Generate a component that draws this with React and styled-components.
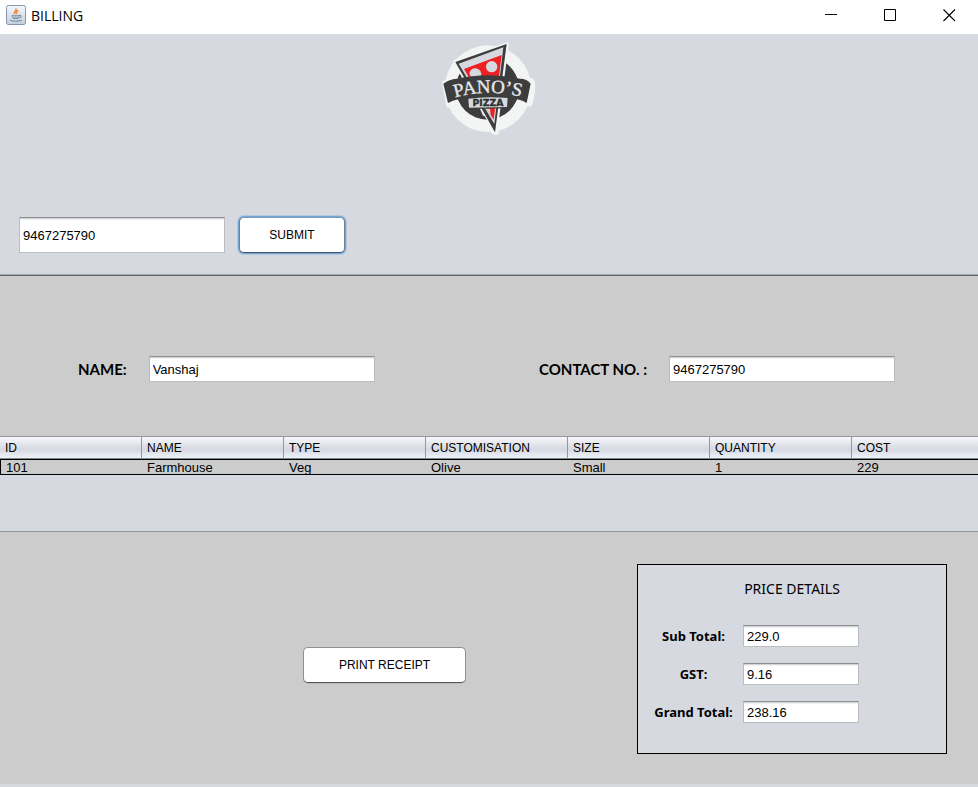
import React from "react";
import styled, { createGlobalStyle, css } from "styled-components";

const PANEL = "#d6d9e0";
const GREY = "#cccccc";

const GlobalStyle = createGlobalStyle`
  * { box-sizing: border-box; }
  body {
    margin: 0;
    background: ${PANEL};
    color: #000;
    font-family: "Liberation Sans", Arial, sans-serif;
    font-size: 13px;
    line-height: 16px;
  }
  button, input { font: inherit; color: inherit; }
`;

const TitleBar = styled.header`
  display: flex;
  align-items: center;
  height: 34px;
  padding-left: 6px;
  background: #fff;
`;

const AppIcon = styled.svg`
  width: 20px;
  height: 20px;
  margin-bottom: 4px;
`;

const WindowTitle = styled.h1`
  flex: 1;
  margin: 0 0 2px 5px;
  font: 400 14px/20px "Open Sans", "Noto Sans", sans-serif;
`;

const WindowControls = styled.div`
  display: flex;
  gap: 1px;
  padding-bottom: 4px;
`;

const WindowButton = styled.button`
  display: flex;
  align-items: center;
  justify-content: center;
  width: 58px;
  height: 30px;
  padding: 0;
  border: 0;
  background: transparent;

  svg {
    width: 13px;
    height: 13px;
  }
`;

const SearchPanel = styled.section`
  display: flex;
  flex-direction: column;
  justify-content: space-between;
  height: 242px;
  padding: 7px 19px 22px;
  border-bottom: 1px solid #62646c;
  box-shadow: inset 0 -1px #a3a5ae;
`;

const Logo = styled.svg`
  align-self: center;
  width: 96px;
  height: 94px;
`;

const SearchForm = styled.form`
  display: flex;
  align-items: center;
  gap: 14px;
`;

const TextField = styled.input`
  width: ${(p) => p.$width}px;
  height: ${(p) => p.$height}px;
  padding: 0 3px;
  border: 1px solid #bcbdbf;
  border-top-color: #8d8e91;
  border-radius: 0;
  background: #fff;
  box-shadow: inset 0 1px #d4d5d7, inset 0 2px #f2f2f3;
  outline: none;
`;

const PushButton = styled.button`
  width: ${(p) => p.$width}px;
  height: 36px;
  padding: 0;
  border: 1px solid #8e8f94;
  border-bottom-color: #55565a;
  border-radius: 5px;
  background: #fff;
  box-shadow: 0 1px #b9babd;
  font-size: 12px;

  ${(p) =>
    p.$primary &&
    css`
      border-color: #76808f;
      border-top-color: #7b9dc2;
      border-bottom-color: #45566b;
      box-shadow: 0 0 0 1px #73a4d1, 0 0 0 2px #b3c8dd;
    `}
`;

const CustomerPanel = styled.section`
  display: flex;
  justify-content: space-between;
  align-items: center;
  height: 160px;
  padding: 26px 83px 0 78px;
  background: ${GREY};
`;

const Field = styled.div`
  display: flex;
  align-items: center;
  gap: 22px;
`;

const FieldLabel = styled.label`
  font: 700 15px/20px Lato, sans-serif;
`;

const TablePanel = styled.section`
  height: 96px;
  border-top: 1px solid #9297a1;
  border-bottom: 1px solid #9297a1;
`;

const OrderTable = styled.table`
  width: 100%;
  table-layout: fixed;
  border-collapse: separate;
  border-spacing: 0;

  col { width: 142px; }
  col:last-child { width: auto; }
`;

const HeadCell = styled.th`
  height: 22px;
  padding: 0 5px;
  border-bottom: 1px solid #7d8683;
  border-right: 1px solid #9297a1;
  background: linear-gradient(#f8f9fb, #dfe2e8 40%, #d6d9e2 60%, #eef2f9);
  font-size: 12px;
  font-weight: 400;
  text-align: left;

  &:last-child { border-right: 0; }
`;

const Cell = styled.td`
  height: 16px;
  padding: 2px 5px 0;
  border: 1px solid #000;
  border-width: 1px 0;
  background: ${GREY};
  line-height: 12px;

  &:first-child { border-left-width: 1px; }
`;

const CheckoutPanel = styled.section`
  display: flex;
  justify-content: space-between;
  align-items: flex-start;
  height: 252px;
  padding: 32px 31px 30px 303px;
  background: ${GREY};
`;

const ReceiptAction = styled.div`
  padding-top: 83px;
`;

const PriceBox = styled.fieldset`
  width: 310px;
  margin: 0;
  padding: 14px 12px 30px;
  border: 1px solid #000;
  background: ${PANEL};
`;

const PriceTitle = styled.h2`
  margin: 0 0 26px;
  font: 400 14px/20px "Noto Sans", "Open Sans", sans-serif;
  text-align: center;
`;

const PriceGrid = styled.div`
  display: grid;
  grid-template-columns: 87px auto;
  justify-content: start;
  align-items: center;
  gap: 16px 6px;
`;

const PriceLabel = styled.label`
  font: 700 13px/22px "Noto Sans", "Open Sans", sans-serif;
  text-align: center;
`;

const columns = ["ID", "NAME", "TYPE", "CUSTOMISATION", "SIZE", "QUANTITY", "COST"];
const orders = [["101", "Farmhouse", "Veg", "Olive", "Small", "1", "229"]];
const prices = [
  { id: "subtotal", label: "Sub Total:", value: "229.0" },
  { id: "gst", label: "GST:", value: "9.16" },
  { id: "grand", label: "Grand Total:", value: "238.16" },
];

function JavaIcon() {
  return (
    <AppIcon viewBox="0 0 20 20" aria-hidden="true">
      <defs>
        <linearGradient id="tile" x1="0" y1="0" x2="0" y2="1">
          <stop offset="0" stopColor="#f7f9fb" />
          <stop offset="1" stopColor="#c3cfda" />
        </linearGradient>
      </defs>
      <rect x=".5" y=".5" width="19" height="19" rx="2" fill="url(#tile)" stroke="#8297ac" />
      <g fill="none" strokeLinecap="round">
        <path d="M10 4c1 1.800-2.600 2.500-1.500 4.700M11.800 5.600c-1.900 1-1.800 1.800-1.300 3" stroke="#e8904c" strokeWidth="1.600" />
        <path d="M13.400 10.500c2.200-.5 2.200 1.900-.3 2.500M4.500 15.200c2.700 1.300 8.300 1.200 11 .1" stroke="#7794ad" strokeWidth="1.200" />
      </g>
      <path d="M5.500 9.700Q9.500 10.900 13.500 9.700Q13.300 12.800 11.800 14H7.200Q5.700 12.800 5.500 9.700Z" fill="#7794ad" />
      <path d="M6.800 11.700Q9.500 12.300 12.300 11.700" fill="none" stroke="#dbe3eb" />
    </AppIcon>
  );
}

function PizzaLogo() {
  return (
    <Logo viewBox="35 15 288 282" role="img" aria-label="Pano's Pizza">
      <circle cx="176" cy="158" r="130" fill="#f3f5f5" />
      <path d="M42 139L76 124L288 121L312 134Q318 165 304 207L280 208L206 231L204 290Q198 297 190 289L150 235L72 211L55 211Z" fill="#f3f5f5" stroke="#f3f5f5" strokeWidth="8" strokeLinejoin="round" />
      <circle cx="174" cy="157" r="94" fill="#3d3d3d" />
      <circle cx="174" cy="157" r="84" fill={PANEL} />
      <path d="M220 76A92 92 0 0 1 207 244Z" fill="#3d3d3d" />
      <path d="M84 184A92 92 0 0 0 164 247L150 214Z" fill="#3d3d3d" />
      <path d="M74 76L235 22L200 292Z" fill="#f3f5f5" stroke="#f3f5f5" strokeWidth="7" strokeLinejoin="round" />
      <path d="M78 78L232 24L197 289Z" fill="#3d3d3d" />
      <path d="M88 83L222 34L195 264Z" fill={PANEL} />
      <path d="M104 99L217 57L193 251L176 224Z" fill="#ed2024" />
      <circle cx="187" cy="92" r="17" fill={PANEL} />
      <path d="M120 112A18 18 0 1 1 155 120L126 126Z" fill={PANEL} />
      <path d="M172 218L182 218L184 238Z" fill={PANEL} />
      <path d="M42 143Q60 129 82 128Q174 107 272 128Q293 128 304 143L292 201Q281 193 263 190L254 204Q174 184 96 205L87 190Q70 193 56 201Z" fill="#3d3d3d" />
      <path d="M115 186Q174 176 237 184L235 215L117 217Z" fill="#3d3d3d" stroke="#3d3d3d" strokeWidth="4" />
      <path d="M117 188Q174 180 235 186L233 213L119 215Z" fill={PANEL} />
      <path id="brand-arc" d="M76 185Q174 157 276 183" fill="none" />
      <text fill="#e7e9ed" stroke="#e7e9ed" strokeWidth="1" fontFamily="Liberation Serif, serif" fontSize="57">
        <textPath href="#brand-arc" startOffset="50%" textAnchor="middle">PANO’S</textPath>
      </text>
      <text x="176" y="210" textAnchor="middle" fill="#2e2e2e" stroke="#2e2e2e" strokeWidth="1" fontFamily="DejaVu Sans, sans-serif" fontSize="28" fontWeight="700">PIZZA</text>
    </Logo>
  );
}

function LabeledField({ id, label, value }) {
  return (
    <Field>
      <FieldLabel htmlFor={id}>{label}</FieldLabel>
      <TextField id={id} $width={226} $height={26} defaultValue={value} />
    </Field>
  );
}

export default function App() {
  return (
    <>
      <GlobalStyle />
      <TitleBar>
        <JavaIcon />
        <WindowTitle>BILLING</WindowTitle>
        <WindowControls>
          <WindowButton aria-label="Minimize">
            <svg viewBox="0 0 13 13"><path d="M0 5.500H12" stroke="#000" /></svg>
          </WindowButton>
          <WindowButton aria-label="Maximize">
            <svg viewBox="0 0 13 13"><path d="M.5 .5H11.500V11.500H.5Z" fill="none" stroke="#000" /></svg>
          </WindowButton>
          <WindowButton aria-label="Close">
            <svg viewBox="0 0 13 13"><path d="M.5 .5L12 12M12 .5L.5 12" stroke="#000" strokeWidth="1.100" /></svg>
          </WindowButton>
        </WindowControls>
      </TitleBar>
      <main>
        <SearchPanel>
          <PizzaLogo />
          <SearchForm onSubmit={(e) => e.preventDefault()}>
            <TextField aria-label="Contact number to look up" $width={206} $height={36} defaultValue="9467275790" />
            <PushButton type="submit" $width={106} $primary>SUBMIT</PushButton>
          </SearchForm>
        </SearchPanel>
        <CustomerPanel>
          <LabeledField id="name" label="NAME:" value="Vanshaj" />
          <LabeledField id="contact" label="CONTACT NO. :" value="9467275790" />
        </CustomerPanel>
        <TablePanel>
          <OrderTable>
            <colgroup>{columns.map((c) => <col key={c} />)}</colgroup>
            <thead>
              <tr>{columns.map((c) => <HeadCell key={c} scope="col">{c}</HeadCell>)}</tr>
            </thead>
            <tbody>
              {orders.map((row) => (
                <tr key={row[0]}>{row.map((v, i) => <Cell key={columns[i]}>{v}</Cell>)}</tr>
              ))}
            </tbody>
          </OrderTable>
        </TablePanel>
        <CheckoutPanel>
          <ReceiptAction>
            <PushButton type="button" $width={163}>PRINT RECEIPT</PushButton>
          </ReceiptAction>
          <PriceBox aria-labelledby="price-title">
            <PriceTitle id="price-title">PRICE DETAILS</PriceTitle>
            <PriceGrid>
              {prices.map((p) => (
                <React.Fragment key={p.id}>
                  <PriceLabel htmlFor={p.id}>{p.label}</PriceLabel>
                  <TextField id={p.id} $width={116} $height={22} defaultValue={p.value} />
                </React.Fragment>
              ))}
            </PriceGrid>
          </PriceBox>
        </CheckoutPanel>
      </main>
    </>
  );
}
